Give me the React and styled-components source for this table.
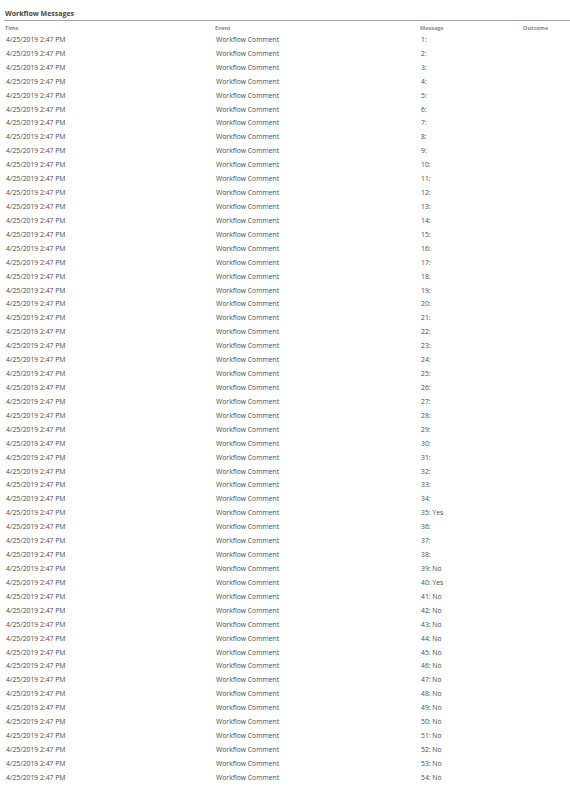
import React from 'react';
import styled, { createGlobalStyle } from 'styled-components';

const GlobalStyle = createGlobalStyle`
    body {
        margin: 0;
        background: #fff;
        font-family: "Open Sans", "Noto Sans", sans-serif;
    }
`;

const messages = Array.from({ length: 54 }, (_, i) => {
    const n = i + 1;
    let outcome = '';
    if (n === 35 || n === 40) outcome = 'Yes';
    else if (n >= 39) outcome = 'No';
    return { n, outcome };
});

const App = () => {
    return (
        <Page>
            <GlobalStyle />
            <Title>Workflow Messages</Title>
            <Table>
                <HeaderRow>
                    <HeadCell>Time</HeadCell>
                    <HeadCell>Event</HeadCell>
                    <HeadCell>Message</HeadCell>
                    <HeadCell>Outcome</HeadCell>
                </HeaderRow>
                {messages.map(m => (
                    <Row key={m.n}>
                        <Cell>4/25/2019 2:47 PM</Cell>
                        <Cell>Workflow Comment</Cell>
                        <Cell>{m.n}:{m.outcome ? ' ' + m.outcome : ''}</Cell>
                        <Cell></Cell>
                    </Row>
                ))}
            </Table>
        </Page>
    );
};

export default App;

const Page = styled.div`
    width: 570px;
    padding: 9px 0 0 4px;
    box-sizing: border-box;
`;

const Title = styled.div`
    font-size: 7px;
    font-weight: 700;
    color: #444;
    line-height: 10px;
    padding: 0 0 1px 1px;
    border-bottom: 1px solid #a6a6a6;
`;

const Table = styled.div`
    display: flex;
    flex-direction: column;
`;

const HeaderRow = styled.div`
    display: grid;
    grid-template-columns: 210px 205px 103px 1fr;
    height: 9.5px;
    align-items: center;
    padding: 2px 0 0 1px;
`;

const HeadCell = styled.div`
    font-size: 5.5px;
    font-weight: 700;
    color: #8a8a8a;
`;

const Row = styled.div`
    display: grid;
    grid-template-columns: 210px 205px 103px 1fr;
    height: 13.925px;
    align-items: center;
    padding-left: 2px;
`;

const Cell = styled.div`
    font-size: 6.8px;
    color: #4c4c4c;
    white-space: nowrap;
`;
